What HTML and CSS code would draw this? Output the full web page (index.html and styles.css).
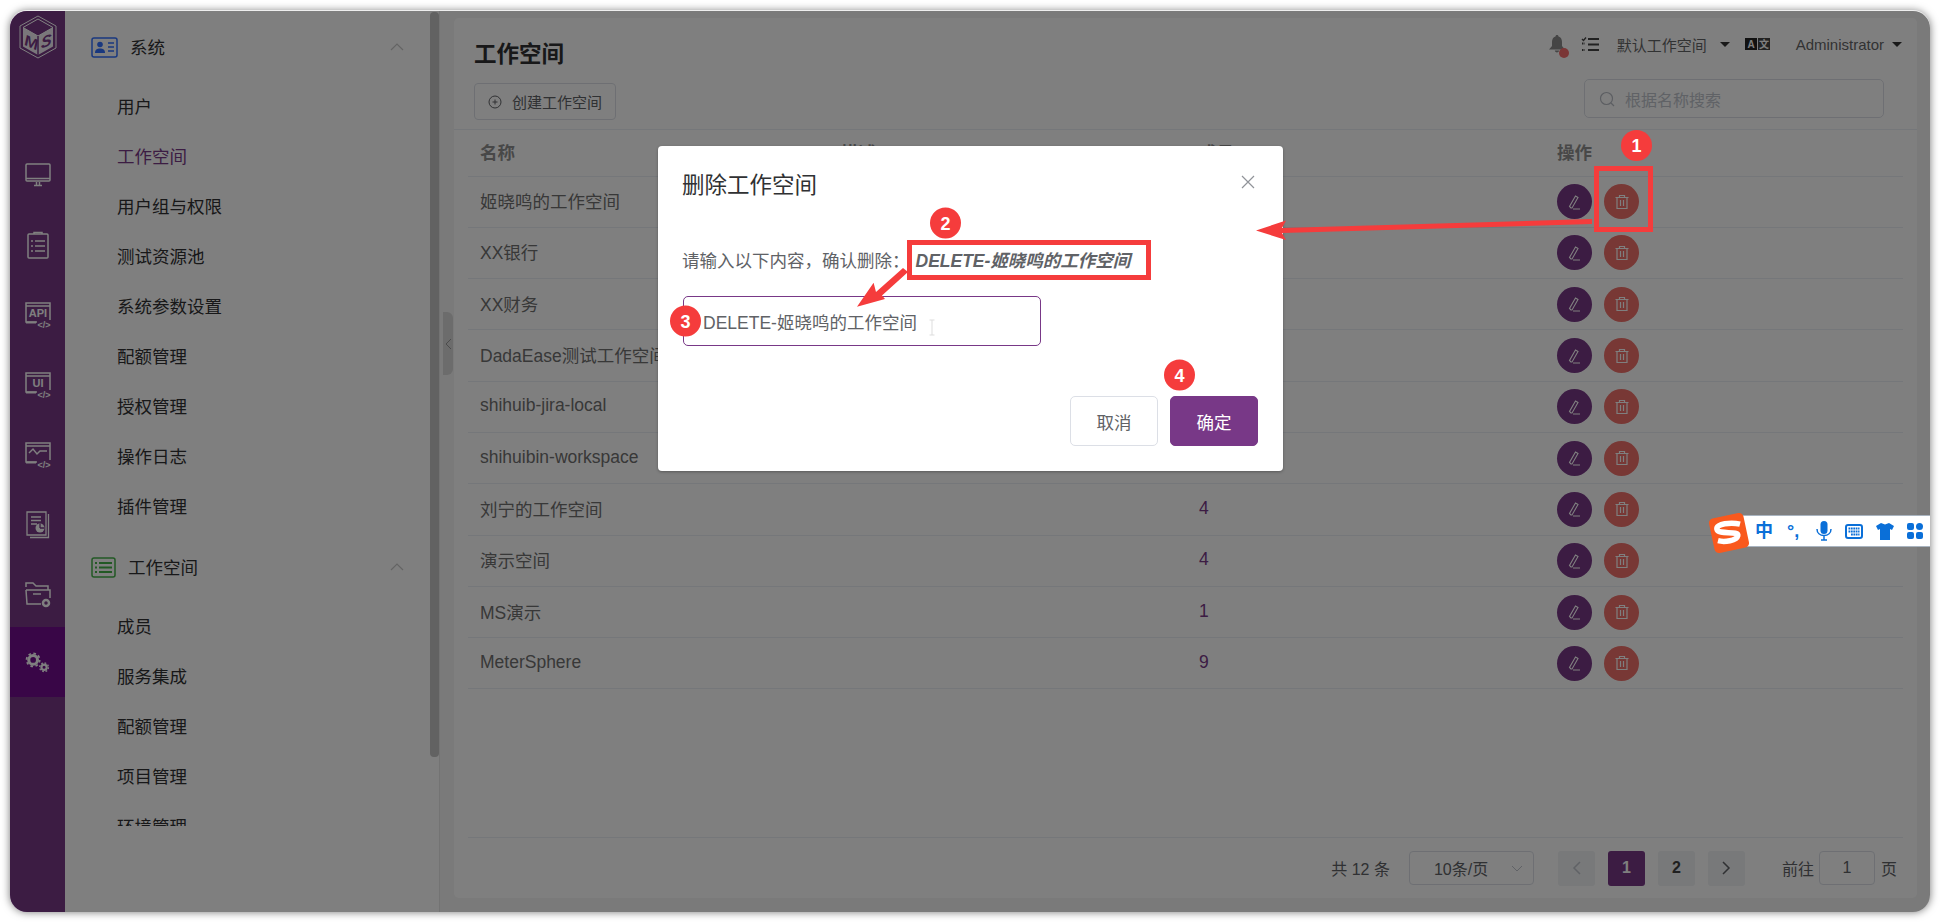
FILE: index.html
```html
<!DOCTYPE html>
<html lang="zh-CN">
<head>
  <meta charset="UTF-8">
  <title>工作空间</title>
  <link rel="stylesheet" href="styles.css">
</head>
<body>
  <div class="app">
    <!-- 左侧导航 -->
    <nav class="rail">
      <div class="rail-logo">
        <svg width="40" height="44" viewBox="0 0 40 44" fill="none" stroke="#fff" stroke-width="1">
          <path d="M20 1 38 11V33L20 43 2 33V11Z"/>
          <path d="M20 4 35 12.500V31.500L20 40 5 31.500V12.500Z" fill="#fff" stroke="none" opacity=".92"/>
          <path d="M20 4 35 12.500 20 21 5 12.500Z" fill="#783887" stroke="#fff"/>
          <path d="M20 21V40" stroke="#783887" stroke-width="1.500"/>
          <text class="logo-m" transform="translate(6.500 30) skewY(24)">M</text>
          <text class="logo-s" transform="translate(23 34) skewY(-24)">S</text>
        </svg>
      </div>
      <a class="rail-item">
        <svg width="28" height="26" viewBox="0 0 28 26" fill="none" stroke="#fff" stroke-width="1.500"><rect x="2" y="2" width="24" height="17" rx="1"/><path d="M2 16.500H26M10 23.500H18M12.500 20V23M15.500 20V23"/></svg>
      </a>
      <a class="rail-item">
        <svg width="26" height="30" viewBox="0 0 26 30" fill="none" stroke="#fff" stroke-width="1.500"><rect x="3" y="4" width="20" height="24" rx="1"/><path d="M9 4V2.500H17V4M6 11H8M10 11H20M6 16H8M10 16H20M6 21H8M10 21H20"/></svg>
      </a>
      <a class="rail-item">
        <svg width="28" height="28" viewBox="0 0 28 28" fill="none" stroke="#fff" stroke-width="1.500"><path d="M13 21H2V2H26V19M2 5H26"/><path d="M2 21.500H12" stroke-width="2"/><text class="rail-txt" x="14" y="16" text-anchor="middle">API</text><text class="rail-code" x="20" y="27" text-anchor="middle">&lt;/&gt;</text></svg>
      </a>
      <a class="rail-item">
        <svg width="28" height="28" viewBox="0 0 28 28" fill="none" stroke="#fff" stroke-width="1.500"><path d="M13 21H2V2H26V19M2 5H26"/><path d="M2 21.500H12" stroke-width="2"/><text class="rail-txt" x="14" y="16" text-anchor="middle">UI</text><text class="rail-code" x="20" y="27" text-anchor="middle">&lt;/&gt;</text></svg>
      </a>
      <a class="rail-item">
        <svg width="28" height="28" viewBox="0 0 28 28" fill="none" stroke="#fff" stroke-width="1.500"><path d="M13 21H2V2H26V19M2 5H26"/><path d="M2 21.500H12" stroke-width="2"/><path d="M5 12 9 8 13 13 16 10H23"/><text class="rail-code" x="20" y="27" text-anchor="middle">&lt;/&gt;</text></svg>
      </a>
      <a class="rail-item">
        <svg width="26" height="28" viewBox="0 0 26 28" fill="none" stroke="#fff" stroke-width="1.300"><path d="M2 1H21V24H2ZM23.500 3V26.500H5"/><path d="M6 6H16M6 9.500H16M6 13H12"/><circle cx="15" cy="17" r="4.500" fill="#fff" stroke="none"/><path d="M15 17V12.500M15 17H19.500" stroke="#783887"/></svg>
      </a>
      <a class="rail-item">
        <svg width="28" height="28" viewBox="0 0 28 28" fill="none" stroke="#fff" stroke-width="1.500"><path d="M2 6V2H9L12 5H24V9"/><path d="M2 9H26V17M2 9 3 23H17"/><path d="M9 13H17"/><circle cx="22" cy="22" r="3" stroke-width="2.500"/></svg>
      </a>
      <a class="rail-item rail-active">
        <svg width="25" height="21" viewBox="0 0 28 24" fill="none" stroke="#fff"><circle cx="9" cy="9" r="5" stroke-width="3.500"/><circle cx="9" cy="9" r="7.500" stroke-width="2" stroke-dasharray="3 2.900"/><circle cx="21.500" cy="17.500" r="3" stroke-width="2.500"/><circle cx="21.500" cy="17.500" r="5" stroke-width="1.500" stroke-dasharray="2 1.930"/></svg>
      </a>
    </nav>

    <aside class="aside">
      <div class="menu">
        <div class="menu-head">
          <svg class="menu-icon" width="27" height="21" viewBox="0 0 27 21" fill="none"><rect x="1" y="1" width="25" height="19" rx="2" stroke="#3370ff" stroke-width="1.500"/><circle cx="9" cy="7.500" r="2.800" fill="#3370ff"/><path d="M4 16C4 12.500 6 11.500 9 11.500S14 12.500 14 16Z" fill="#3370ff"/><path d="M17 6H23M17 10H23M17 14H23" stroke="#3370ff" stroke-width="1.300"/></svg>
          <span class="menu-title">系统</span>
          <svg class="menu-arrow" width="14" height="8" viewBox="0 0 14 8" fill="none" stroke="#c8c8c8" stroke-width="1.200"><path d="M1 7 7 1 13 7"/></svg>
        </div>
        <ul class="menu-list">
          <li>用户</li>
          <li class="menu-current">工作空间</li>
          <li>用户组与权限</li>
          <li>测试资源池</li>
          <li>系统参数设置</li>
          <li>配额管理</li>
          <li>授权管理</li>
          <li>操作日志</li>
          <li>插件管理</li>
        </ul>
        <div class="menu-head">
          <svg class="menu-icon" width="25" height="21" viewBox="0 0 25 21" fill="none"><rect x="1" y="1" width="23" height="19" rx="2" stroke="#44b349" stroke-width="1.500"/><path d="M8 6H21M8 10.500H21M8 15H21M4 6H6M4 10.500H6M4 15H6" stroke="#44b349" stroke-width="1.800"/></svg>
          <span class="menu-title">工作空间</span>
          <svg class="menu-arrow" width="14" height="8" viewBox="0 0 14 8" fill="none" stroke="#c8c8c8" stroke-width="1.200"><path d="M1 7 7 1 13 7"/></svg>
        </div>
        <ul class="menu-list">
          <li>成员</li>
          <li>服务集成</li>
          <li>配额管理</li>
          <li>项目管理</li>
          <li>环境管理</li>
        </ul>
      </div>
      <div class="scrollbar"></div>
    </aside>

    <main class="main">
      <div class="handle">
        <svg width="7" height="12" viewBox="0 0 7 12" fill="none" stroke="#999" stroke-width="1"><path d="M6 1 1 6 6 11"/></svg>
      </div>
      <section class="card">
        <header class="card-head">
          <div class="head-left">
            <h1 class="page-title">工作空间</h1>
            <button class="btn-create">
              <svg width="14" height="14" viewBox="0 0 14 14" fill="none" stroke="#606266"><circle cx="7" cy="7" r="6"/><path d="M4.500 7H9.500M7 4.500V9.500"/></svg>
              创建工作空间
            </button>
          </div>
          <div class="head-right">
            <div class="topbar">
              <span class="bell">
                <svg width="16" height="18" viewBox="0 0 16 18" fill="#8a8a8a"><path d="M8 0C9 0 9.500 .7 9.500 1.500C12 2.300 13 4.500 13 7V11L16 14.500H0L3 11V7C3 4.500 4 2.300 6.500 1.500C6.500 .7 7 0 8 0ZM5.800 15.500H10.200C10 16.800 9 17.500 8 17.500S6 16.800 5.800 15.500Z"/></svg>
                <i class="bell-dot"></i>
              </span>
              <svg class="task-icon" width="18" height="15" viewBox="0 0 18 15" fill="none" stroke="#444" stroke-width="2"><path d="M7 2H18M7 7.500H18M7 13H18"/><path d="M1 2 2.500 3.500 5 .5" stroke-width="1.400"/><path d="M1 6.500H4M1 13H4" stroke-width="2" stroke-dasharray="1.500 1"/></svg>
              <span class="top-text">默认工作空间</span>
              <i class="caret caret-ws"></i>
              <svg class="lang-icon" width="25" height="12" viewBox="0 0 25 12"><rect width="12" height="12" fill="#222"/><rect x="13" width="12" height="12" fill="#444"/><text class="lang-a" x="6" y="9.500" text-anchor="middle">A</text><text class="lang-z" x="19" y="9.500" text-anchor="middle">文</text></svg>
              <span class="top-text top-user">Administrator</span>
              <i class="caret"></i>
            </div>
            <div class="search">
              <svg width="16" height="16" viewBox="0 0 16 16" fill="none" stroke="#b8bcc4" stroke-width="1.200"><circle cx="7.500" cy="7.500" r="6"/><path d="M12 12 15 15"/></svg>
              <span class="placeholder">根据名称搜索</span>
            </div>
          </div>
        </header>

        <div class="table-wrap">
          <table class="table">
            <colgroup><col class="col-name"><col class="col-desc"><col class="col-num"><col></colgroup>
            <thead>
              <tr><th>名称</th><th>描述</th><th>成员</th><th>操作</th></tr>
            </thead>
            <tbody>
              <tr><td>姬晓鸣的工作空间</td><td></td><td class="num">1</td><td><div class="ops"><button class="op op-edit"><svg width="18" height="18" viewBox="0 0 18 18" fill="none" stroke="#fff" stroke-width="1.100"><path d="M5 15 3.500 13.500 9.500 3 12 4.500 6 15ZM7 16H14"/></svg></button><button class="op op-del"><svg width="16" height="16" viewBox="0 0 16 16" fill="none" stroke="#fff" stroke-width="1.200"><path d="M1.500 3.500H14.500M5.500 3.500V1.500H10.500V3.500M3 3.500V14.500H13V3.500M6.500 6V12M9.500 6V12"/></svg></button></div></td></tr>
              <tr><td>XX银行</td><td></td><td class="num">1</td><td><div class="ops"><button class="op op-edit"><svg width="18" height="18" viewBox="0 0 18 18" fill="none" stroke="#fff" stroke-width="1.100"><path d="M5 15 3.500 13.500 9.500 3 12 4.500 6 15ZM7 16H14"/></svg></button><button class="op op-del"><svg width="16" height="16" viewBox="0 0 16 16" fill="none" stroke="#fff" stroke-width="1.200"><path d="M1.500 3.500H14.500M5.500 3.500V1.500H10.500V3.500M3 3.500V14.500H13V3.500M6.500 6V12M9.500 6V12"/></svg></button></div></td></tr>
              <tr><td>XX财务</td><td></td><td class="num">1</td><td><div class="ops"><button class="op op-edit"><svg width="18" height="18" viewBox="0 0 18 18" fill="none" stroke="#fff" stroke-width="1.100"><path d="M5 15 3.500 13.500 9.500 3 12 4.500 6 15ZM7 16H14"/></svg></button><button class="op op-del"><svg width="16" height="16" viewBox="0 0 16 16" fill="none" stroke="#fff" stroke-width="1.200"><path d="M1.500 3.500H14.500M5.500 3.500V1.500H10.500V3.500M3 3.500V14.500H13V3.500M6.500 6V12M9.500 6V12"/></svg></button></div></td></tr>
              <tr><td>DadaEase测试工作空间</td><td></td><td class="num">1</td><td><div class="ops"><button class="op op-edit"><svg width="18" height="18" viewBox="0 0 18 18" fill="none" stroke="#fff" stroke-width="1.100"><path d="M5 15 3.500 13.500 9.500 3 12 4.500 6 15ZM7 16H14"/></svg></button><button class="op op-del"><svg width="16" height="16" viewBox="0 0 16 16" fill="none" stroke="#fff" stroke-width="1.200"><path d="M1.500 3.500H14.500M5.500 3.500V1.500H10.500V3.500M3 3.500V14.500H13V3.500M6.500 6V12M9.500 6V12"/></svg></button></div></td></tr>
              <tr><td>shihuib-jira-local</td><td></td><td class="num">1</td><td><div class="ops"><button class="op op-edit"><svg width="18" height="18" viewBox="0 0 18 18" fill="none" stroke="#fff" stroke-width="1.100"><path d="M5 15 3.500 13.500 9.500 3 12 4.500 6 15ZM7 16H14"/></svg></button><button class="op op-del"><svg width="16" height="16" viewBox="0 0 16 16" fill="none" stroke="#fff" stroke-width="1.200"><path d="M1.500 3.500H14.500M5.500 3.500V1.500H10.500V3.500M3 3.500V14.500H13V3.500M6.500 6V12M9.500 6V12"/></svg></button></div></td></tr>
              <tr><td>shihuibin-workspace</td><td></td><td class="num">1</td><td><div class="ops"><button class="op op-edit"><svg width="18" height="18" viewBox="0 0 18 18" fill="none" stroke="#fff" stroke-width="1.100"><path d="M5 15 3.500 13.500 9.500 3 12 4.500 6 15ZM7 16H14"/></svg></button><button class="op op-del"><svg width="16" height="16" viewBox="0 0 16 16" fill="none" stroke="#fff" stroke-width="1.200"><path d="M1.500 3.500H14.500M5.500 3.500V1.500H10.500V3.500M3 3.500V14.500H13V3.500M6.500 6V12M9.500 6V12"/></svg></button></div></td></tr>
              <tr><td>刘宁的工作空间</td><td></td><td class="num">4</td><td><div class="ops"><button class="op op-edit"><svg width="18" height="18" viewBox="0 0 18 18" fill="none" stroke="#fff" stroke-width="1.100"><path d="M5 15 3.500 13.500 9.500 3 12 4.500 6 15ZM7 16H14"/></svg></button><button class="op op-del"><svg width="16" height="16" viewBox="0 0 16 16" fill="none" stroke="#fff" stroke-width="1.200"><path d="M1.500 3.500H14.500M5.500 3.500V1.500H10.500V3.500M3 3.500V14.500H13V3.500M6.500 6V12M9.500 6V12"/></svg></button></div></td></tr>
              <tr><td>演示空间</td><td></td><td class="num">4</td><td><div class="ops"><button class="op op-edit"><svg width="18" height="18" viewBox="0 0 18 18" fill="none" stroke="#fff" stroke-width="1.100"><path d="M5 15 3.500 13.500 9.500 3 12 4.500 6 15ZM7 16H14"/></svg></button><button class="op op-del"><svg width="16" height="16" viewBox="0 0 16 16" fill="none" stroke="#fff" stroke-width="1.200"><path d="M1.500 3.500H14.500M5.500 3.500V1.500H10.500V3.500M3 3.500V14.500H13V3.500M6.500 6V12M9.500 6V12"/></svg></button></div></td></tr>
              <tr><td>MS演示</td><td></td><td class="num">1</td><td><div class="ops"><button class="op op-edit"><svg width="18" height="18" viewBox="0 0 18 18" fill="none" stroke="#fff" stroke-width="1.100"><path d="M5 15 3.500 13.500 9.500 3 12 4.500 6 15ZM7 16H14"/></svg></button><button class="op op-del"><svg width="16" height="16" viewBox="0 0 16 16" fill="none" stroke="#fff" stroke-width="1.200"><path d="M1.500 3.500H14.500M5.500 3.500V1.500H10.500V3.500M3 3.500V14.500H13V3.500M6.500 6V12M9.500 6V12"/></svg></button></div></td></tr>
              <tr><td>MeterSphere</td><td></td><td class="num">9</td><td><div class="ops"><button class="op op-edit"><svg width="18" height="18" viewBox="0 0 18 18" fill="none" stroke="#fff" stroke-width="1.100"><path d="M5 15 3.500 13.500 9.500 3 12 4.500 6 15ZM7 16H14"/></svg></button><button class="op op-del"><svg width="16" height="16" viewBox="0 0 16 16" fill="none" stroke="#fff" stroke-width="1.200"><path d="M1.500 3.500H14.500M5.500 3.500V1.500H10.500V3.500M3 3.500V14.500H13V3.500M6.500 6V12M9.500 6V12"/></svg></button></div></td></tr>
            </tbody>
          </table>
        </div>

        <footer class="pager">
          <span class="pager-total">共 12 条</span>
          <div class="pager-size">
            <span>10条/页</span>
            <svg width="12" height="7" viewBox="0 0 12 7" fill="none" stroke="#c0c4cc"><path d="M1 1 6 6 11 1"/></svg>
          </div>
          <span class="page-btn page-prev"><svg width="9" height="14" viewBox="0 0 9 14" fill="none" stroke="#c0c4cc" stroke-width="1.500"><path d="M8 1 2 7 8 13"/></svg></span>
          <span class="page-btn page-on">1</span>
          <span class="page-btn">2</span>
          <span class="page-btn"><svg width="9" height="14" viewBox="0 0 9 14" fill="none" stroke="#606266" stroke-width="1.500"><path d="M1 1 7 7 1 13"/></svg></span>
          <span class="pager-goto">前往</span>
          <span class="pager-input">1</span>
          <span class="pager-unit">页</span>
        </footer>
      </section>
    </main>

    <!-- 遮罩和弹窗 -->
    <div class="overlay">
      <div class="dialog">
        <div class="dialog-head">
          <span class="dialog-title">删除工作空间</span>
          <svg class="dialog-close" width="14" height="14" viewBox="0 0 14 14" fill="none" stroke="#909399" stroke-width="1.200"><path d="M1 1 13 13M13 1 1 13"/></svg>
        </div>
        <p class="dialog-text">请输入以下内容，确认删除：<em class="confirm-word">DELETE-姬晓鸣的工作空间</em></p>
        <input class="dialog-input" type="text" value="DELETE-姬晓鸣的工作空间">
        <div class="dialog-foot">
          <button class="btn">取消</button>
          <button class="btn btn-primary">确定</button>
        </div>
      </div>
    </div>
  </div>

  <!-- 搜狗输入法 -->
  <div class="ime">
    <svg class="ime-logo" width="44" height="44" viewBox="0 0 40 40"><rect x="4" y="4" width="32" height="32" rx="4" fill="#f9591d" transform="rotate(-12 20 20)"/><path d="M30 12C22 10 8 11.500 9 16.500C10 22 29 17.500 28 22.500C27 27 16 28.500 10 27" fill="none" stroke="#fff" stroke-width="5"/></svg>
    <span class="ime-zh">中</span>
    <span class="ime-punc">°,</span>
    <svg class="ime-tool" width="16" height="20" viewBox="0 0 16 20" fill="none" stroke="#0a6fd8" stroke-width="1.500"><rect x="4.500" y="0" width="7" height="13" rx="3.500" fill="#0a6fd8" stroke="none"/><path d="M1 8C1 12 4 14.500 8 14.500S15 12 15 8M8 14.500V19M5 19H11"/></svg>
    <svg class="ime-tool" width="18" height="15" viewBox="0 0 18 15" fill="none" stroke="#0a6fd8"><rect x="1" y="1" width="16" height="13" rx="2" stroke-width="2"/><path d="M3.500 4.500H14.500M3.500 7.500H14.500M6 10.500H14.500" stroke-width="2" stroke-dasharray="1.800 .6"/></svg>
    <svg class="ime-tool" width="18" height="17" viewBox="0 0 18 17" fill="#0a6fd8"><path d="M5 0 9 1.500 13 0 18 3 16 7 14 6V17H4V6L2 7 0 3Z"/></svg>
    <svg class="ime-tool" width="16" height="16" viewBox="0 0 16 16" fill="#0a6fd8"><rect width="7" height="7" rx="2"/><rect x="9" width="7" height="7" rx="3.500"/><rect y="9" width="7" height="7" rx="2"/><rect x="9" y="9" width="7" height="7" rx="2"/></svg>
  </div>

  <!-- 标注 -->
  <svg class="marks" width="1940" height="922" viewBox="0 0 1940 922">
    <g fill="none" stroke="#f53c3c" stroke-width="5">
      <rect x="1596.500" y="168.500" width="54" height="61"/>
      <rect x="909.500" y="242.500" width="239" height="35"/>
    </g>
    <path class="ibeam" d="M929.500 320H934.500M932 320V335M929.500 335H934.500"/>
    <g fill="#f53c3c">
      <path d="M1256 230.500 1286 220.500 1282 228 1592 219 1592 224 1282 233 1286 240Z"/>
      <path d="M857 306.700 873.600 282.700 876 292 903 268 908 272 882 295.500 885 299Z"/>
      <circle cx="1636.500" cy="145.500" r="15.500"/>
      <circle cx="945.500" cy="223" r="15.500"/>
      <circle cx="685.500" cy="321" r="15.500"/>
      <circle cx="1179.500" cy="375" r="15.500"/>
    </g>
    <g class="mark-num" text-anchor="middle">
      <text x="1636.500" y="152">1</text>
      <text x="945.500" y="229.500">2</text>
      <text x="685.500" y="327.500">3</text>
      <text x="1179.500" y="381.500">4</text>
    </g>
  </svg>
</body>
</html>
```

FILE: styles.css
```css
* {
  box-sizing: border-box;
}
html, body {
  margin: 0;
  height: 100%;
  background: #fff;
  overflow: hidden;
}
body {
  position: relative;
  padding: 11px 10px 10px;
  font-family: "Liberation Sans", "Noto Sans CJK SC", sans-serif;
  font-size: 17.5px;
  color: #606266;
}
button {
  font-family: inherit;
}
ul {
  list-style: none;
  margin: 0;
  padding: 0;
}

.app {
  position: relative;
  display: flex;
  width: 1920px;
  height: 901px;
  border-radius: 17px;
  overflow: hidden;
  background: #f5f5f5;
  box-shadow: 0 -1px 0 #eee, 0 0 9px rgba(0, 0, 0, .55);
}

/* rail */
.rail {
  flex: none;
  width: 55px;
  background: #783887;
}
.rail-logo {
  display: flex;
  justify-content: center;
  align-items: flex-start;
  height: 126px;
  padding-top: 4px;
}
.logo-m, .logo-s {
  font-size: 16px;
  font-weight: 700;
  font-style: italic;
  fill: #783887;
  stroke: none;
}
.rail-item {
  display: flex;
  justify-content: center;
  align-items: center;
  height: 70px;
  padding-top: 5px;
}
.rail-active {
  background: #730d8f;
  padding-top: 0;
}
.rail-txt {
  font-size: 11px;
  font-weight: 700;
  fill: #fff;
  stroke: none;
}
.rail-code {
  font-size: 9px;
  font-weight: 700;
  fill: #fff;
  stroke: none;
}

/* menu */
.aside {
  position: relative;
  flex: none;
  width: 375px;
  background: #fff;
  border-right: 1px solid #e6e6e6;
}
.menu {
  height: 815px;
  padding-top: 11px;
  overflow: hidden;
}
.menu-head {
  display: flex;
  align-items: center;
  height: 50px;
  padding-left: 26px;
  padding-right: 35px;
  color: #303133;
}
.menu-icon {
  margin-right: 12px;
}
.menu-title {
  flex: 1;
  padding-bottom: 2px;
}
.menu-list {
  padding: 10px 0;
}
.menu-list li {
  height: 50px;
  line-height: 50px;
  padding-left: 52px;
  color: #303133;
}
.menu-current {
  color: #783887 !important;
}
.scrollbar {
  position: absolute;
  top: 1px;
  right: 0;
  width: 9px;
  height: 745px;
  border-radius: 4px;
  background: #c4c4c4;
}

/* main */
.main {
  position: relative;
  flex: 1;
  min-width: 0;
  padding: 7px 13px 14px 14px;
  display: flex;
}
.handle {
  position: absolute;
  left: 3px;
  top: 301px;
  width: 10px;
  height: 63px;
  border-radius: 0 6px 6px 0;
  background: #d9d9d9;
  display: flex;
  align-items: center;
  justify-content: center;
}
.card {
  flex: 1;
  display: flex;
  flex-direction: column;
  background: #fff;
  border-radius: 5px;
}
.card-head {
  flex: none;
  display: flex;
  justify-content: space-between;
  height: 112px;
  padding: 20px 33px 0 20px;
  border-bottom: 1px solid #ebeef5;
}
.page-title {
  margin: 2px 0 0;
  font-size: 22.500px;
  line-height: 30px;
  font-weight: 700;
  color: #303133;
}
.btn-create {
  display: flex;
  align-items: center;
  gap: 10px;
  height: 37px;
  margin-top: 13px;
  padding: 0 13px;
  background: #fff;
  border: 1px solid #dcdfe6;
  border-radius: 4px;
  font-size: 15px;
  color: #606266;
}
.head-right {
  display: flex;
  flex-direction: column;
  align-items: flex-end;
}
.topbar {
  display: flex;
  align-items: center;
  justify-content: flex-end;
  height: 14px;
  margin: -1px -18px 0 0;
  font-size: 15px;
}
.bell {
  position: relative;
  display: flex;
  margin-right: 16px;
}
.bell-dot {
  position: absolute;
  right: -4px;
  bottom: -5px;
  width: 10px;
  height: 10px;
  border-radius: 50%;
  background: #f56c6c;
}
.task-icon {
  margin-right: 18px;
}
.top-text {
  color: #303133;
  opacity: .75;
}
.top-user {
  margin-right: 8px;
}
.caret {
  width: 0;
  height: 0;
  border-left: 5px solid transparent;
  border-right: 5px solid transparent;
  border-top: 5px solid #333;
}
.caret-ws {
  margin-left: 13px;
  margin-right: 15px;
}
.lang-icon {
  margin-right: 26px;
}
.lang-a, .lang-z {
  font-size: 10px;
  font-weight: 700;
  fill: #fff;
}
.search {
  display: flex;
  align-items: center;
  gap: 10px;
  width: 300px;
  height: 39px;
  margin-top: 28px;
  padding-left: 14px;
  border: 1px solid #dcdfe6;
  border-radius: 5px;
}
.placeholder {
  font-size: 16px;
  color: #c0c4cc;
}

/* table */
.table-wrap {
  flex: 1;
  padding: 0 14px;
}
.table {
  width: 100%;
  table-layout: fixed;
  border-collapse: collapse;
}
.col-name {
  width: 361px;
}
.col-desc {
  width: 358px;
}
.col-num {
  width: 358px;
}
.table th {
  height: 46px;
  padding: 0 12px 3px;
  text-align: left;
  font-weight: 700;
  color: #909090;
  border-bottom: 1px solid #ebeef5;
}
.table td {
  height: 51.300px;
  padding: 0 12px 2px;
  border-bottom: 1px solid #ebeef5;
  white-space: nowrap;
  color: #707070;
}
.table td:last-child {
  padding-bottom: 0;
}
.table td.num {
  color: #783887;
}
.ops {
  display: flex;
  gap: 12px;
}
.op {
  display: flex;
  align-items: center;
  justify-content: center;
  width: 35px;
  height: 35px;
  padding: 0;
  border: 0;
  border-radius: 50%;
}
.op-edit {
  background: #783887;
}
.op-del {
  background: #f0706a;
}

/* pager */
.pager {
  flex: none;
  display: flex;
  align-items: center;
  height: 61px;
  margin: 0 14px;
  padding-right: 6px;
  justify-content: flex-end;
  border-top: 1px solid #ebeef5;
  font-size: 16px;
}
.pager-total {
  margin-right: 19px;
}
.pager-size {
  display: flex;
  align-items: center;
  justify-content: space-between;
  width: 125px;
  height: 34px;
  margin-right: 24px;
  padding: 0 10px 0 24px;
  border: 1px solid #dcdfe6;
  border-radius: 4px;
}
.page-btn {
  display: flex;
  align-items: center;
  justify-content: center;
  width: 37px;
  height: 35px;
  margin-right: 13px;
  border-radius: 3px;
  background: #f0f2f5;
  font-weight: 700;
  color: #404040;
}
.page-on {
  background: #783887;
  color: #fff;
}
.pager-goto {
  margin-left: 24px;
  margin-right: 5px;
}
.pager-input {
  width: 56px;
  height: 34px;
  line-height: 32px;
  text-align: center;
  border: 1px solid #dcdfe6;
  border-radius: 4px;
  margin-right: 6px;
}

/* dialog */
.overlay {
  position: absolute;
  inset: 0;
  padding: 135px 0 0 648px;
  background: rgba(0, 0, 0, .5);
}
.dialog {
  width: 625px;
  height: 325px;
  padding: 24px 25px 0 24px;
  background: #fff;
  border-radius: 4px;
  box-shadow: 0 1px 3px rgba(0, 0, 0, .3);
}
.dialog-head {
  display: flex;
  justify-content: space-between;
  align-items: flex-start;
  height: 30px;
}
.dialog-title {
  font-size: 22.500px;
  line-height: 30px;
  margin-top: 1px;
  color: #303133;
}
.dialog-close {
  margin: 5px 3px 0 0;
}
.dialog-text {
  margin: 49px 0 0;
  line-height: 24px;
}
.confirm-word {
  margin-left: 6px;
  font-weight: 700;
  font-style: italic;
}
.dialog-input {
  display: block;
  width: 358px;
  height: 50px;
  margin: 23px 0 0 1px;
  padding: 0 19px;
  border: 1px solid #783887;
  border-radius: 5px;
  outline: none;
  font-family: inherit;
  font-size: 17.5px;
  color: #606266;
}
.dialog-foot {
  display: flex;
  justify-content: flex-end;
  gap: 12px;
  margin-top: 50px;
}
.btn {
  width: 88px;
  height: 50px;
  padding: 0;
  background: #fff;
  border: 1px solid #dcdfe6;
  border-radius: 5px;
  font-size: 17.5px;
  color: #606266;
}
.btn-primary {
  background: #783887;
  border-color: #783887;
  color: #fff;
}

/* ime */
.ime {
  position: absolute;
  left: 1740px;
  top: 515px;
  display: flex;
  align-items: center;
  width: 190px;
  height: 32px;
  background: #fff;
  border-top: 1px solid #a9b4c0;
  border-bottom: 1px solid #a9b4c0;
}
.ime-logo {
  position: absolute;
  left: -33px;
  top: -5px;
}
.ime-zh {
  position: absolute;
  left: 15px;
  font-size: 18px;
  font-weight: 700;
  line-height: 30px;
  color: #0a6fd8;
}
.ime-punc {
  position: absolute;
  left: 47px;
  font-size: 18px;
  font-weight: 700;
  line-height: 26px;
  color: #0a6fd8;
}
.ime-tool {
  flex: none;
  margin-right: 13px;
}
.ime-tool:nth-of-type(2) {
  margin-left: 76px;
}

/* marks */
.marks {
  position: absolute;
  left: 0;
  top: 0;
}
.ibeam {
  fill: none;
  stroke: #ddd;
  stroke-width: 1;
}
.mark-num {
  font-size: 18px;
  font-weight: 700;
  fill: #fff;
}
```
